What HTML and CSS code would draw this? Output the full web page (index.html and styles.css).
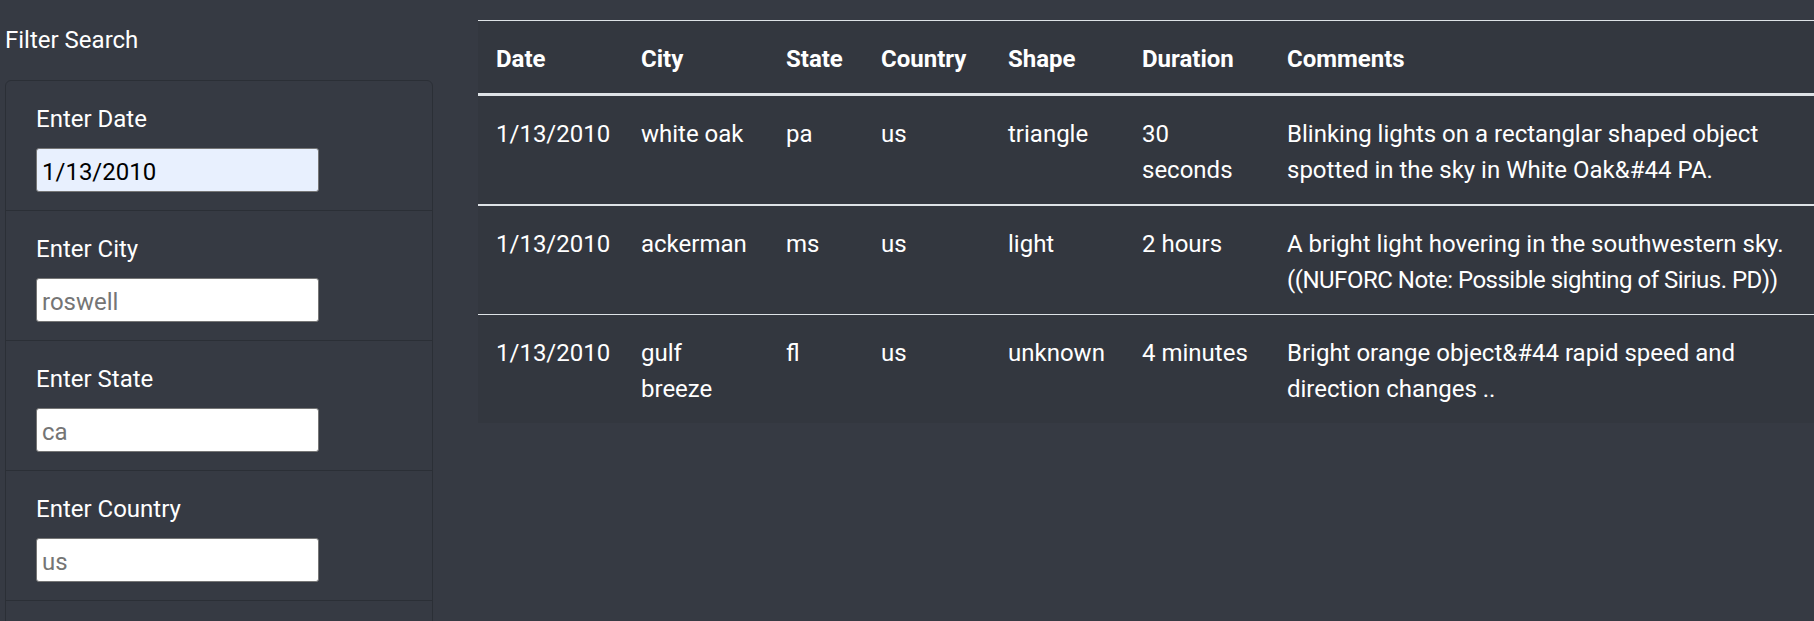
FILE: index.html
```html
<!DOCTYPE html>
<html lang="en">
<head>
<meta charset="utf-8">
<title>UFO Sightings</title>
<link rel="stylesheet" href="styles.css">
</head>
<body>
<div class="page">
  <aside class="sidebar">
    <div class="sidebar-title">Filter Search</div>
    <ul class="filters">
      <li class="filter-item">
        <label class="filter-label" for="datetime">Enter Date</label>
        <input class="filter-input autofilled" id="datetime" type="text" value="1/13/2010">
      </li>
      <li class="filter-item">
        <label class="filter-label" for="city">Enter City</label>
        <input class="filter-input" id="city" type="text" placeholder="roswell">
      </li>
      <li class="filter-item">
        <label class="filter-label" for="state">Enter State</label>
        <input class="filter-input" id="state" type="text" placeholder="ca">
      </li>
      <li class="filter-item">
        <label class="filter-label" for="country">Enter Country</label>
        <input class="filter-input" id="country" type="text" placeholder="us">
      </li>
      <li class="filter-item">
        <label class="filter-label" for="shape">Enter Shape</label>
        <input class="filter-input" id="shape" type="text" placeholder="circle">
      </li>
    </ul>
  </aside>
  <main class="main">
    <table class="ufo-table">
      <colgroup>
        <col class="c-date">
        <col class="c-city">
        <col class="c-state">
        <col class="c-country">
        <col class="c-shape">
        <col class="c-duration">
        <col class="c-comments">
      </colgroup>
      <thead>
        <tr>
          <th>Date</th>
          <th>City</th>
          <th>State</th>
          <th>Country</th>
          <th>Shape</th>
          <th>Duration</th>
          <th>Comments</th>
        </tr>
      </thead>
      <tbody>
        <tr>
          <td>1/13/2010</td>
          <td>white oak</td>
          <td>pa</td>
          <td>us</td>
          <td>triangle</td>
          <td>30 seconds</td>
          <td>Blinking lights on a rectanglar shaped object spotted in the sky in White Oak&amp;#44 PA.</td>
        </tr>
        <tr class="row-thin">
          <td>1/13/2010</td>
          <td>ackerman</td>
          <td>ms</td>
          <td>us</td>
          <td>light</td>
          <td>2 hours</td>
          <td>A bright light hovering in the southwestern sky. <span class="note">((NUFORC Note: Possible sighting of Sirius. PD))</span></td>
        </tr>
        <tr class="row-hair">
          <td>1/13/2010</td>
          <td>gulf breeze</td>
          <td>fl</td>
          <td>us</td>
          <td>unknown</td>
          <td>4 minutes</td>
          <td>Bright orange object&amp;#44 rapid speed and direction changes ..</td>
        </tr>
      </tbody>
    </table>
  </main>
</div>
</body>
</html>
```
FILE: styles.css
```css
html, body {
  margin: 0;
  padding: 0;
  background: #363a43;
  overflow: hidden;
}

body {
  font-family: Roboto, "Liberation Sans", sans-serif;
  font-size: 24px;
  line-height: 36px;
  color: #ffffff;
}

.page {
  display: flex;
  align-items: flex-start;
}

.sidebar {
  flex: none;
  width: 428px;
  margin-left: 5px;
  padding-top: 22px;
}

.sidebar-title {
  margin-bottom: 22px;
}

.filters {
  list-style: none;
  margin: 0;
  padding: 0;
  border: 1px solid #2b2f36;
  border-radius: 6px;
}

.filter-item {
  padding: 18px 30px;
}

.filter-item + .filter-item {
  border-top: 1px solid #2b2f36;
}

.filter-label {
  display: block;
  margin-bottom: 13px;
  padding-top: 2px;
  height: 34px;
}

.filter-input {
  display: block;
  box-sizing: border-box;
  width: 283px;
  height: 44px;
  margin: 0;
  padding: 3px 5px 0;
  border: 1px solid #767676;
  border-radius: 3px;
  background: #ffffff;
  color: #000000;
  font-family: Roboto, "Liberation Sans", sans-serif;
  font-size: 24px;
  outline: none;
}

.filter-input::placeholder {
  color: #757575;
  opacity: 1;
}

.filter-input.autofilled {
  background: #e8f0fe;
}

.main {
  flex: 1;
  min-width: 0;
  margin-left: 45px;
  padding-top: 20px;
}

.ufo-table {
  width: 100%;
  border-collapse: collapse;
  table-layout: fixed;
  background: #33373f;
}

.c-date { width: 145px; }
.c-city { width: 145px; }
.c-state { width: 95px; }
.c-country { width: 127px; }
.c-shape { width: 134px; }
.c-duration { width: 145px; }

.ufo-table th,
.ufo-table td {
  padding: 20px 18px 16px;
  text-align: left;
  vertical-align: top;
}

.ufo-table thead th {
  font-weight: 700;
  border-top: 1px solid #dee2e6;
  border-bottom: 3px solid #dee2e6;
}

.ufo-table .row-thin td {
  border-top: 2px solid #dee2e6;
}

.ufo-table .row-hair td {
  border-top: 1px solid #dee2e6;
}

.note {
  white-space: nowrap;
  letter-spacing: -0.5px;
}
```
